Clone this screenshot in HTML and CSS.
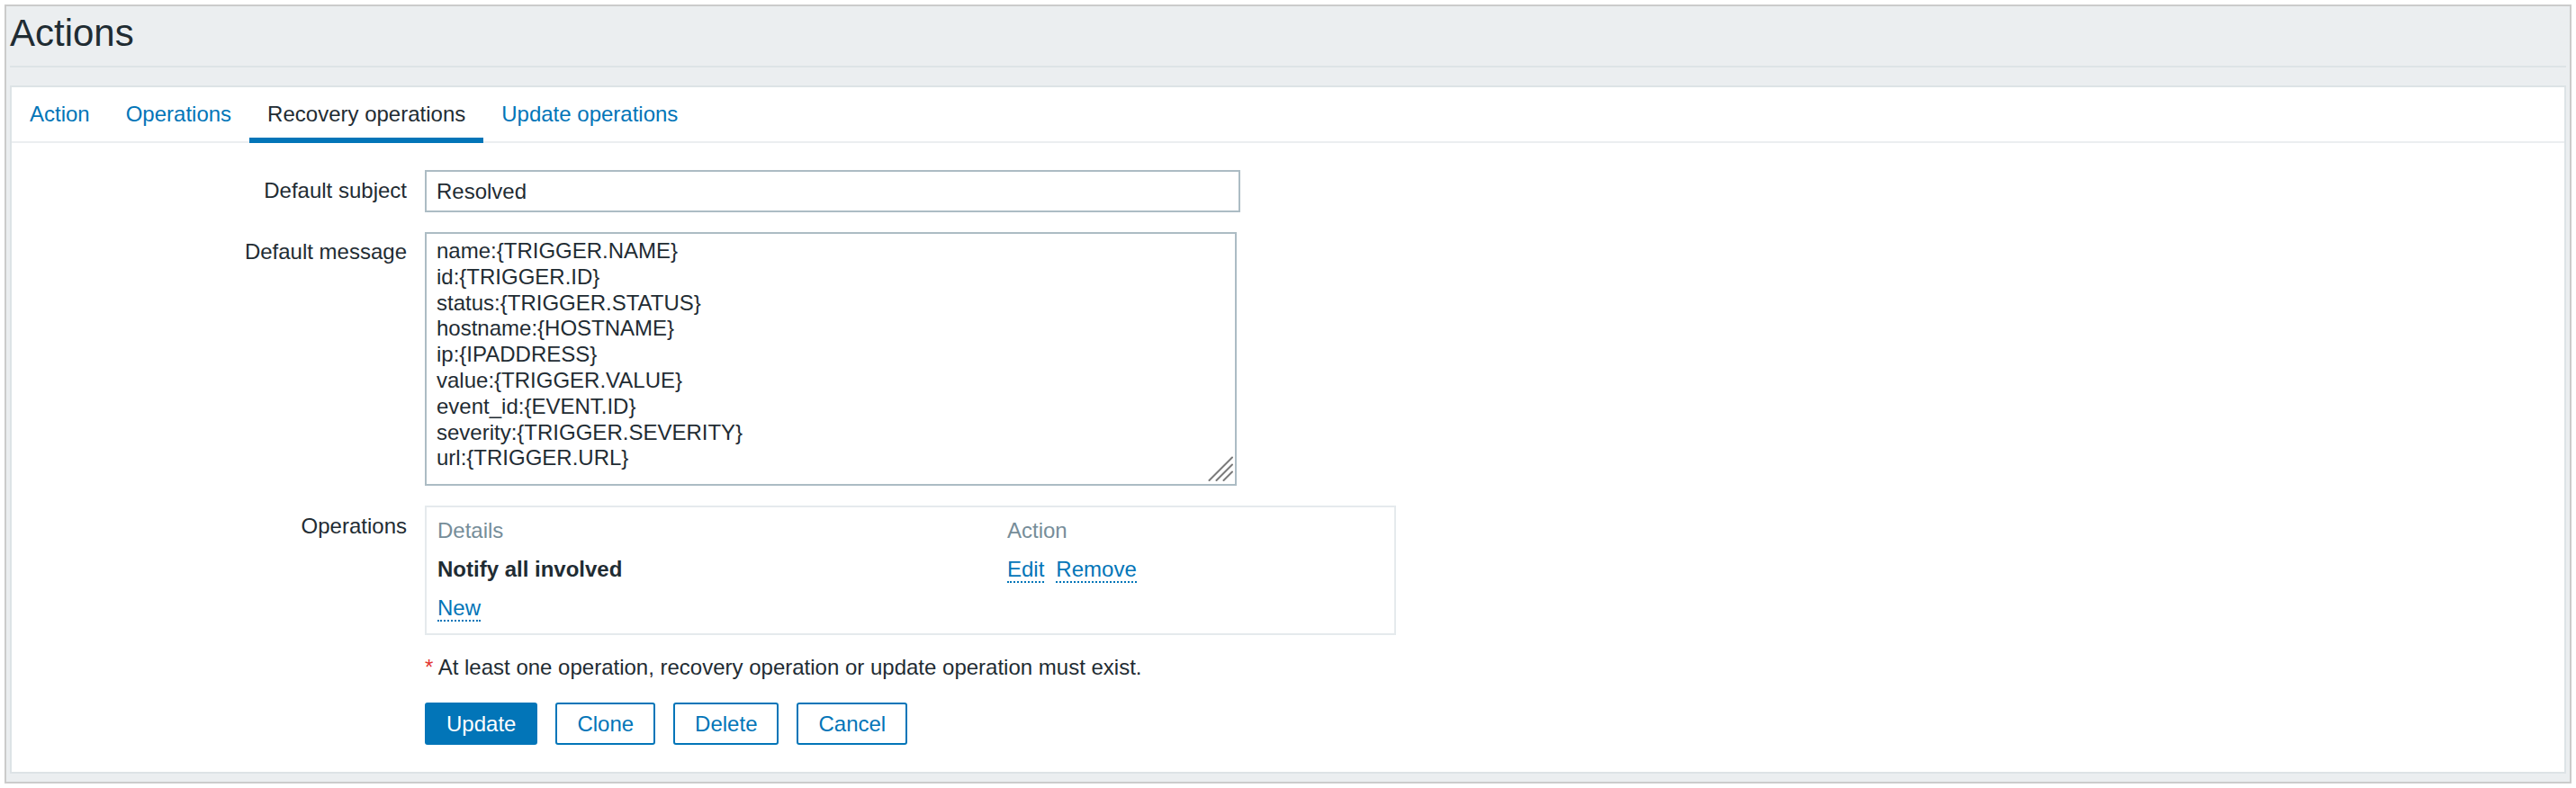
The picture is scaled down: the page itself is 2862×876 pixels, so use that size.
FILE: index.html
```html
<!DOCTYPE html>
<html lang="en">
<head>
<meta charset="utf-8">
<title>Actions</title>
<link rel="stylesheet" href="styles.css">
</head>
<body>
<div class="frame">
  <header class="page-header">
    <h1 class="page-title">Actions</h1>
  </header>
  <main class="panel">
    <nav class="tabs">
      <a class="tab">Action</a>
      <a class="tab">Operations</a>
      <a class="tab tab-active">Recovery operations</a>
      <a class="tab">Update operations</a>
    </nav>
    <form class="form">
      <label class="form-label">Default subject</label>
      <div class="form-field"><input class="text-input" type="text" value="Resolved"></div>

      <label class="form-label form-label-tight">Default message</label>
      <div class="form-field">
        <div class="textarea-wrap">
          <textarea class="text-area">name:{TRIGGER.NAME}
id:{TRIGGER.ID}
status:{TRIGGER.STATUS}
hostname:{HOSTNAME}
ip:{IPADDRESS}
value:{TRIGGER.VALUE}
event_id:{EVENT.ID}
severity:{TRIGGER.SEVERITY}
url:{TRIGGER.URL}</textarea>
          <svg class="resize-grip" width="28" height="28" viewBox="0 0 28 28" aria-hidden="true">
            <path d="M1.5 27 L27 1.5 M9.5 27 L27 9.5 M17.5 27 L27 17.5" stroke="#7a7a7a" stroke-width="2" stroke-linecap="round" fill="none"/>
          </svg>
        </div>
      </div>

      <div class="form-label">Operations</div>
      <div class="form-field">
        <div class="ops-box">
          <div class="ops-grid">
            <div class="ops-cell ops-head">Details</div>
            <div class="ops-cell ops-head">Action</div>
            <div class="ops-cell ops-strong">Notify all involved</div>
            <div class="ops-cell"><a class="link">Edit</a><a class="link link-next">Remove</a></div>
            <div class="ops-cell"><a class="link">New</a></div>
            <div class="ops-cell"></div>
          </div>
        </div>
      </div>

      <div class="form-field form-note"><span class="asterisk">*</span> At least one operation, recovery operation or update operation must exist.</div>

      <div class="form-field form-buttons">
        <button type="button" class="btn btn-primary">Update</button>
        <button type="button" class="btn">Clone</button>
        <button type="button" class="btn">Delete</button>
        <button type="button" class="btn">Cancel</button>
      </div>
    </form>
  </main>
</div>
</body>
</html>
```

FILE: styles.css
```css
html, body {
  margin: 0;
  padding: 0;
  background: #ffffff;
}

body {
  font-family: "Liberation Sans", Arial, sans-serif;
  color: #1f2c33;
  font-size: 24px;
}

.frame {
  margin: 5px;
  border: 2px solid #cbcbcb;
  background: #ebeef0;
  padding: 0 4px 9px;
}

.page-header {
  height: 66px;
  border-bottom: 2px solid #dde3e6;
}

.page-title {
  margin: 0;
  padding-top: 6px;
  font-size: 42px;
  line-height: 48px;
  font-weight: normal;
  color: #1f2c33;
}

.panel {
  margin-top: 20px;
  border: 2px solid #dde3e6;
  background: #ffffff;
  padding-bottom: 30px;
}

.tabs {
  display: flex;
  align-items: flex-start;
  height: 60px;
  border-bottom: 2px solid #ebeef0;
}

.tab {
  padding: 16px 20px 12px;
  font-size: 24px;
  line-height: 28px;
  color: #0275b8;
  border-bottom: 6px solid transparent;
  margin-bottom: -2px;
  white-space: nowrap;
  cursor: pointer;
}

.tab-active {
  color: #1f2c33;
  border-bottom-color: #0275b8;
}

.form {
  display: grid;
  grid-template-columns: 439px 1fr;
  column-gap: 20px;
  row-gap: 22px;
  padding-top: 30px;
  margin: 0;
}

.form-label {
  grid-column: 1;
  text-align: right;
  font-size: 24px;
  line-height: 28px;
  padding-top: 9px;
  color: #1f2c33;
}

.form-label-tight {
  padding-top: 8px;
}

.form-field {
  grid-column: 2;
  font-size: 24px;
  line-height: 28px;
}

.text-input {
  display: block;
  box-sizing: border-box;
  width: 906px;
  height: 47px;
  margin: 0;
  padding: 0 11px;
  border: 2px solid #acbcc4;
  border-radius: 0;
  font-family: "Liberation Sans", Arial, sans-serif;
  font-size: 24px;
  color: #1f2c33;
  background: #ffffff;
  outline: none;
}

.textarea-wrap {
  position: relative;
  width: 902px;
}

.text-area {
  display: block;
  box-sizing: border-box;
  width: 902px;
  height: 282px;
  margin: 0;
  padding: 5px 11px 11px;
  border: 2px solid #acbcc4;
  border-radius: 0;
  font-family: "Liberation Sans", Arial, sans-serif;
  font-size: 24px;
  line-height: 28.8px;
  color: #1f2c33;
  background: #ffffff;
  outline: none;
  resize: none;
  overflow: hidden;
}

.resize-grip {
  position: absolute;
  right: 4px;
  bottom: 5px;
  display: block;
}

.ops-box {
  box-sizing: border-box;
  width: 1079px;
  border: 2px solid #e5eaed;
  padding: 5px 0 6px;
}

.ops-grid {
  display: grid;
  grid-template-columns: 633px 1fr;
}

.ops-cell {
  padding: 7px 12px 8px;
  font-size: 24px;
  line-height: 28px;
  min-height: 28px;
  white-space: nowrap;
}

.ops-head {
  color: #768d99;
}

.ops-strong {
  font-weight: bold;
  color: #1f2c33;
}

.link {
  color: #0275b8;
  border-bottom: 2px dotted #0275b8;
  cursor: pointer;
}

.link-next {
  margin-left: 13px;
}

.form-note {
  color: #1f2c33;
}

.asterisk {
  color: #e33734;
}

.form-buttons {
  display: flex;
  gap: 20px;
  margin-top: 3px;
}

.btn {
  box-sizing: border-box;
  height: 47px;
  margin: 0;
  padding: 0 22px;
  border: 2px solid #0275b8;
  border-radius: 3px;
  background: #ffffff;
  color: #0275b8;
  font-family: "Liberation Sans", Arial, sans-serif;
  font-size: 24px;
  line-height: 28px;
  cursor: pointer;
}

.btn-primary {
  background: #0275b8;
  color: #ffffff;
}
```
